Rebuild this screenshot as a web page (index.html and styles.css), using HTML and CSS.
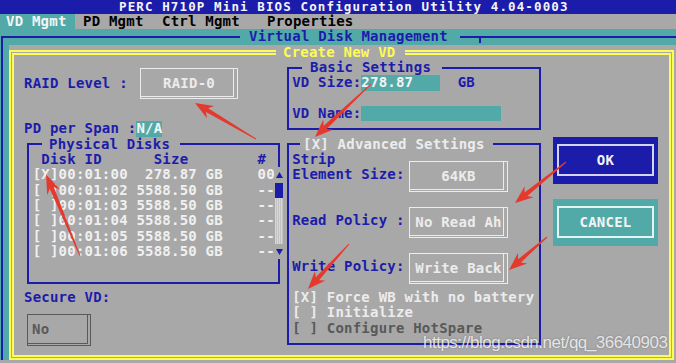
FILE: index.html
```html
<!DOCTYPE html>
<html lang="en">
<head>
<meta charset="UTF-8"/>
<title>PERC H710P Mini BIOS Configuration Utility</title>
<link rel="stylesheet" href="styles.css">
</head>
<body>
<div class="titlebar">PERC H710P Mini BIOS Configuration Utility 4.04-0003</div>
<div class="menu">
  <span class="tab on">VD Mgmt</span>
  <span class="tab pd">PD Mgmt</span>
  <span class="tab ctrl">Ctrl Mgmt</span>
  <span class="tab">Properties</span>
</div>
<div class="vdm-wrap">
<fieldset class="vdm">
  <legend>Virtual Disk Management</legend>
  <div class="create-wrap">
  <fieldset class="create">
    <legend>Create New VD</legend>
    <div class="cols">
      <div class="col-left">
        <div class="raid">
          <span class="lbl">RAID Level :</span>
          <span class="vbox raid-box">RAID-0</span>
        </div>
        <div class="span-row">PD per Span :<span class="na">N/A</span></div>
        <fieldset class="grp pdisks">
          <legend>Physical Disks</legend>
          <div class="hdr"> Disk ID      Size        #</div>
          <div class="disklist">
            <div class="rows">
              <div>[X]00:01:00  278.87 GB    00</div>
              <div>[ ]00:01:02 5588.50 GB    --</div>
              <div>[ ]00:01:03 5588.50 GB    --</div>
              <div>[ ]00:01:04 5588.50 GB    --</div>
              <div>[ ]00:01:05 5588.50 GB    --</div>
              <div>[ ]00:01:06 5588.50 GB    --</div>
            </div>
            <div class="sbar">
              <span class="arr"><svg width="7" height="6" viewBox="0 0 7 6"><polygon points="3.5,0 7,6 0,6"/></svg></span>
              <span class="thumb"></span>
              <span class="track"></span>
              <span class="arr"><svg width="7" height="6" viewBox="0 0 7 6"><polygon points="0,0 7,0 3.5,6"/></svg></span>
            </div>
          </div>
        </fieldset>
        <div class="secure">Secure VD:</div>
        <div class="vbox off">No</div>
      </div>

      <div class="col-mid">
        <fieldset class="grp basic">
          <legend>Basic Settings</legend>
          <div class="frow"><span class="lbl">VD Size:</span><span class="fld size">278.87</span><span class="unit">GB</span></div>
          <div class="gap"></div>
          <div class="frow"><span class="lbl">VD Name:</span><span class="fld name"></span></div>
        </fieldset>
        <fieldset class="grp adv">
          <legend>[X] Advanced Settings</legend>
          <div class="setting">
            <span class="lbl two">Strip<br>Element Size:</span>
            <span class="vbox">64KB</span>
          </div>
          <div class="setting">
            <span class="lbl">Read Policy :</span>
            <span class="vbox">No Read Ah</span>
          </div>
          <div class="setting">
            <span class="lbl">Write Policy:</span>
            <span class="vbox">Write Back</span>
          </div>
          <div class="chk">[X] Force WB with no battery</div>
          <div class="chk">[ ] Initialize</div>
          <div class="chk off">[ ] Configure HotSpare</div>
        </fieldset>
      </div>

      <div class="col-btns">
        <div class="btn ok"><span>OK</span></div>
        <div class="btn cancel"><span>CANCEL</span></div>
      </div>
    </div>
  </fieldset>
  </div>
</fieldset>
</div>

<svg class="arrows" width="676" height="363" viewBox="0 0 676 363">
  <polygon points="256.25,138.57 208.17,108.22 214.06,106.11 195,103 206.94,118.17 205.93,112 255.75,139.43"/>
  <polygon points="370.66,83.64 323.65,125.78 323.26,119.55 315,137 332.88,129.71 326.67,128.98 371.34,84.36"/>
  <polygon points="80.46,255.81 53.78,187.02 60.13,189.8 46,174 47.19,195.16 49.72,188.7 79.54,256.19"/>
  <polygon points="565.69,161.61 524.53,192.51 524.63,186.26 515,203 533.41,197.16 527.29,195.93 566.31,162.39"/>
  <polygon points="546.67,236.62 518.13,259.16 518,252.9 509,270 527.18,263.48 521.01,262.48 547.33,237.38"/>
  <polygon points="348.63,243.66 315.79,277.17 314.94,270.99 308,289 325.28,280.41 319.05,280.13 349.37,244.34"/>
</svg>
<div class="wm">https://blog.csdn.net/qq_36640903</div>
</body>
</html>
```

FILE: styles.css
```css
*{box-sizing:border-box;margin:0;padding:0}
body{width:676px;height:363px;overflow:hidden;position:relative;background:#a8a8a8;font:bold 14px/15.33px 'DejaVu Sans Mono',monospace;letter-spacing:.22px;color:#1c1caa}
.titlebar{height:14px;font-size:12.5px;line-height:14px;letter-spacing:1.12px;background:#1c1caa;color:#f4f4f4;padding-left:119px;white-space:pre}
.menu{display:flex;height:15.33px;color:#000}
.menu .tab{white-space:pre}
.menu .on{width:75px;padding-left:6px;background:#52aaa8;color:#f4f4f4}
.menu .pd{width:87px;padding-left:8px}
.menu .ctrl{width:105px}

fieldset{border:2px solid #1c1caa;min-width:0}
legend{line-height:15.33px;white-space:pre}

.vdm-wrap{background:#52aaa8}
.vdm{margin-left:1px;border-right:0;border-bottom:0;padding-left:6px;background:#52aaa8}
.vdm>legend{margin-left:231px;padding:0 12px 0 9px;position:relative}
.vdm>legend::after{content:'';position:absolute;left:calc(100% + 19px);top:8px;width:2px;height:6px;background:#1c1caa}
.create-wrap{background:#a8a8a8}
.create{border:5px double #fcfc54;margin-right:2px;background:#a8a8a8}
.create>legend{color:#fcfc54;margin-left:262px;padding:0 10px 0 7px}
.cols{display:flex;height:295.5px;padding-left:10px}

.col-left{width:256px;flex-shrink:0}
.raid{display:flex;align-items:center;height:31px;margin-top:8px}
.raid .lbl{width:116px;white-space:pre}
.raid-box{width:98px;height:31px}
.vbox{display:flex;align-items:center;justify-content:center;color:#ececec;border:1px solid #ececec;box-shadow:inset -3px -1px 0 #a8a8a8,inset -4px -2px 0 #ececec;white-space:pre}
.span-row{margin-top:22.33px;white-space:pre}
.na{display:inline-block;height:15.33px;background:#52aaa8;color:#f4f4f4}

.pdisks{margin-left:3px;padding:0 0 22.67px 3.65px}
.pdisks>legend{margin-left:9.35px;padding:0 10px 0 7px}
.hdr{white-space:pre}
.disklist{display:flex}
.rows{width:242.2px;flex-shrink:0;color:#f0f0f0}
.rows div{height:15.33px;white-space:pre}
.sbar{width:8.65px;flex-shrink:0;margin-right:-5.5px;display:flex;flex-direction:column;background:#a8a8a8}
.sbar .arr{height:15.33px;display:flex;align-items:center;justify-content:center}
.sbar svg{fill:#1c1caa}
.sbar .thumb{height:15.33px;background:#1c1caa}
.sbar .track{height:46px;background:#c2c2c2 linear-gradient(90deg,#d8d8d8 50%,transparent 50%);background-size:2px 2px}
.secure{margin-top:6px}
.vbox.off{margin:8.67px 0 0 3px;width:64px;height:32px;justify-content:flex-start;padding-left:4px;color:#5a5a5a;border-color:#5a5a5a;box-shadow:inset -2px -1px 0 #a8a8a8,inset -3px -2px 0 #5a5a5a}

.col-mid{margin-left:7px;width:254px;flex-shrink:0}
.basic{padding:0 0 6.67px 3.15px}
.basic>legend{margin-left:9.85px;padding:0 11px 0 8px}
.frow{display:flex;height:15.33px}
.frow span{white-space:pre}
.frow .lbl{width:69.2px}
.fld{background:#52aaa8;color:#f4f4f4}
.fld.size{width:79px}
.fld.name{width:140px}
.unit{margin-left:17.3px}
.gap{height:15.33px}

.adv{margin-top:6.67px;padding:0 0 6.67px 3.15px}
.adv>legend{color:#ececec;margin-left:7.85px;padding:0 8px 0 3px}
.setting{display:flex;align-items:center;height:46px}
.setting .lbl{width:116.85px;white-space:pre}
.setting .lbl.two{align-self:flex-start}
.setting .vbox{width:99px;height:31px;margin-top:3px}
.chk{color:#ececec;white-space:pre}
.chk.off{color:#595959}

.col-btns{margin-left:12px;width:105px;flex-shrink:0}
.btn{display:flex;height:47px;padding:7.5px 4px;color:#f4f4f4}
.btn span{flex:1;display:flex;align-items:center;justify-content:center;border:2px solid #d4d4f0}
.ok{margin-top:77px;background:#1c1caa}
.cancel{margin-top:15px;background:#52aaa8}
.cancel span{border-color:#e4f4f2}

.arrows{position:absolute;left:0;top:0;fill:#e43a2e}
.wm{position:absolute;left:423px;top:333px;font:17px/20px 'Liberation Sans',Arial,sans-serif;letter-spacing:-.5px;color:rgba(255,255,255,.8);text-shadow:0 0 2px rgba(0,0,0,.3);white-space:pre}
```
